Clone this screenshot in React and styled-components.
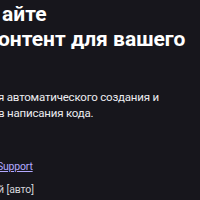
import React from 'react';
import styled, { createGlobalStyle } from 'styled-components';

const GlobalStyle = createGlobalStyle`
  html, body {
    margin: 0;
    padding: 0;
    background-color: #17161c;
  }
  body {
    width: 200px;
    height: 200px;
    overflow: hidden;
  }
`;

const App = () => (
  <>
    <GlobalStyle />
    <Page>
      <Hero>
        <Title>
          <TitleLine indent={4}>айте</TitleLine>
          <TitleLine>онтент для вашего</TitleLine>
        </Title>
        <Lead>
          я автоматического создания и
          <br />
          в написания кода.
        </Lead>
        <SupportLink href="#">Support</SupportLink>
        <Language>й [авто]</Language>
      </Hero>
    </Page>
  </>
);

const Page = styled.main`
  width: 200px;
  height: 200px;
  overflow: hidden;
  padding-top: 2px;
  box-sizing: border-box;
`;

const Hero = styled.section`
  display: flex;
  flex-direction: column;
  align-items: flex-start;
  margin-left: -2px;
  white-space: nowrap;
`;

const Title = styled.h1`
  margin: 0 0 38px;
  font-family: Roboto, 'Noto Sans', sans-serif;
  font-weight: 700;
  font-size: 21px;
  line-height: 25px;
  color: #ffffff;
`;

const TitleLine = styled.span`
  display: block;
  text-indent: ${(p) => p.indent || 0}px;
`;

const Lead = styled.p`
  margin: 0 0 39px;
  font-family: Roboto, 'Noto Sans', sans-serif;
  font-size: 11.5px;
  line-height: 15.5px;
  letter-spacing: -0.2px;
  color: #ececf0;
`;

const SupportLink = styled.a`
  margin-left: -1px;
  font-family: Roboto, 'Noto Sans', sans-serif;
  font-size: 10.5px;
  line-height: 14px;
  letter-spacing: -0.2px;
  color: #b3a9ff;
  text-decoration: underline;
`;

const Language = styled.div`
  margin-top: 9px;
  font-family: Roboto, 'Noto Sans', sans-serif;
  font-size: 10.5px;
  line-height: 14px;
  letter-spacing: -0.1px;
  color: #d4d4da;
`;

export default App;
